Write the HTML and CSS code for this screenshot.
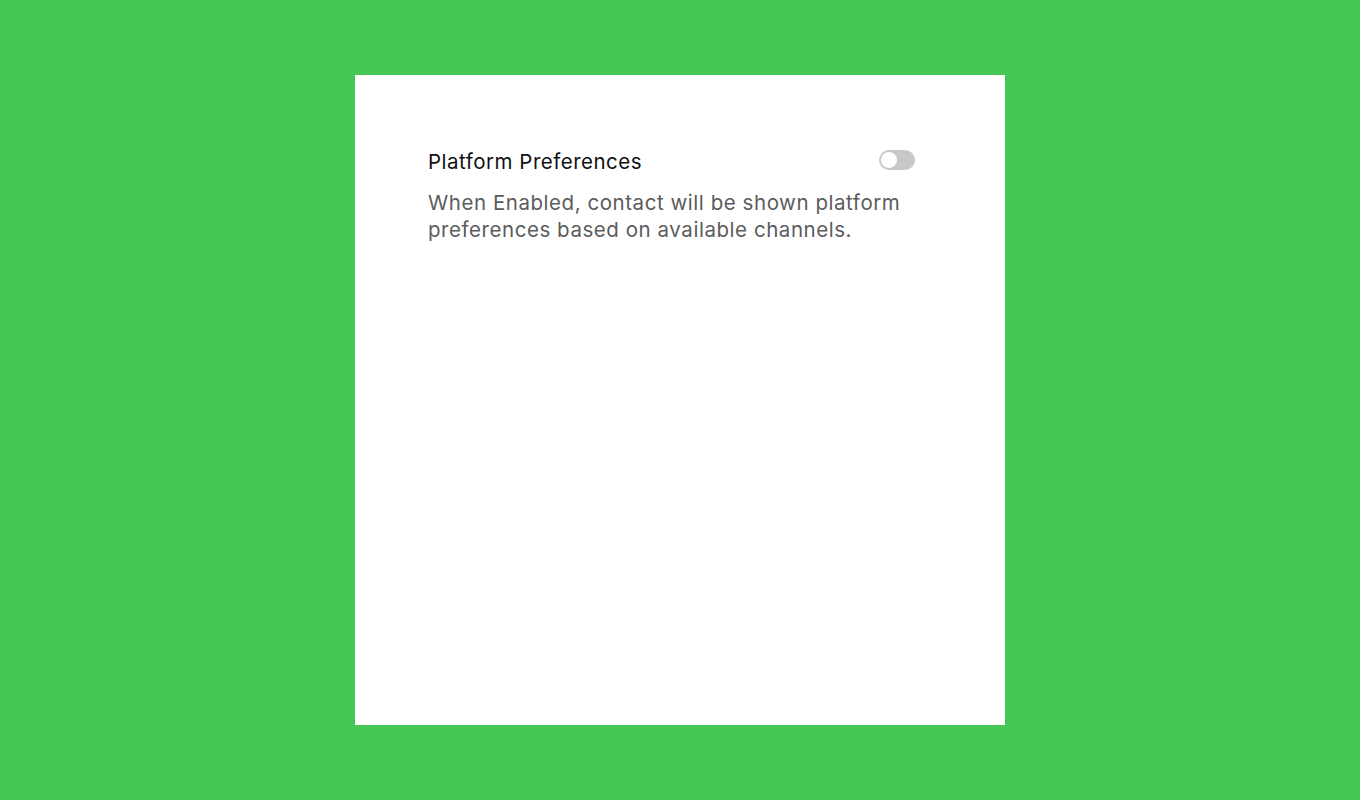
FILE: index.html
```html
<!DOCTYPE html>
<html lang="en">
<head>
  <meta charset="UTF-8" />
  <title>Platform Preferences</title>
  <link rel="stylesheet" href="styles.css">
</head>
<body>
  <div class="card">
    <div class="setting-head">
      <div class="setting-title">Platform Preferences</div>
      <label class="toggle">
        <input type="checkbox">
        <span class="knob"></span>
      </label>
    </div>
    <p class="setting-desc">When Enabled, contact will be shown platform preferences based on available channels.</p>
  </div>
</body>
</html>
```

FILE: styles.css
```css
body {
  margin: 0;
  padding: 75px 0;
  background: #45c756;
  font-family: 'Inter', sans-serif;
}

.card {
  width: 650px;
  height: 650px;
  box-sizing: border-box;
  margin: 0 auto;
  padding: 73px 90px 0 73px;
  background: #fff;
}

.setting-head {
  display: flex;
  justify-content: space-between;
  align-items: center;
}

.setting-title {
  font-size: 20.5px;
  line-height: 28px;
  letter-spacing: 0.5px;
  color: #111;
}

.toggle {
  position: relative;
  width: 36px;
  height: 20px;
  margin-top: -4px;
  border-radius: 10px;
  background: #c8c8c8;
  cursor: pointer;
}

.toggle input {
  display: none;
}

.knob {
  position: absolute;
  top: 1px;
  left: 1px;
  width: 16px;
  height: 16px;
  border: 1px solid #c8c8c8;
  border-radius: 50%;
  background: #fff;
}

.setting-desc {
  margin: 13px 0 0;
  font-size: 20.5px;
  line-height: 27px;
  letter-spacing: 0.55px;
  color: #5c5c5c;
}
```
